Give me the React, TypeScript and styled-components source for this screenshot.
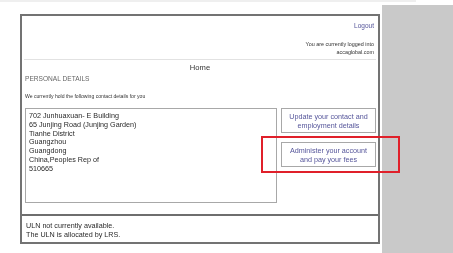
import React from 'react'
import styled, { createGlobalStyle } from 'styled-components'

const GlobalStyle = createGlobalStyle`
  html, body {
    margin: 0;
    padding: 0;
    background: #ffffff;
    font-family: Arial, "Liberation Sans", sans-serif;
    -webkit-font-smoothing: antialiased;
  }
`
const Page = styled.div`
  position: relative;
  width: 453px;
  height: 253px;
  overflow: hidden;
  background: #fff;
  will-change: transform;
`
const TopStrip = styled.div`
  width: 416px;
  height: 2px;
  background: #efefef;
`
const Row = styled.div`
  display: flex;
  align-items: flex-start;
`
const LeftArea = styled.div`
  width: 362px;
  padding: 12px 0 0 20px;
`
const SidePanel = styled.div`
  width: 71px;
  height: 250px;
  margin-top: 3px;
  background: #c9c9c9;
`
const Frame = styled.div`
  width: 356px;
  height: 226px;
  border: 2px solid #737373;
  display: flex;
  flex-direction: column;
  background: #fff;
`
const Header = styled.div`
  height: 43px;
  margin: 0 2px;
  border-bottom: 1px solid #e2e2e2;
  display: flex;
  flex-direction: column;
  align-items: flex-end;
  padding-right: 2px;
`
const LogoutLink = styled.a`
  margin-top: 6px;
  font-size: 6.5px;
  color: #55559a;
  text-decoration: none;
`
const LoggedIn = styled.div`
  margin-top: 11px;
  font-size: 5.4px;
  line-height: 8px;
  color: #333;
  text-align: right;
`
const Home = styled.div`
  text-align: center;
  font-size: 7.6px;
  color: #333;
  margin-top: 3px;
  line-height: 9px;
`
const SectionTitle = styled.div`
  font-size: 6.6px;
  color: #666;
  padding-left: 3px;
  margin-top: 2px;
  line-height: 9px;
`
const Intro = styled.div`
  font-size: 5.1px;
  color: #333;
  padding-left: 3px;
  margin-top: 10px;
  line-height: 7px;
`
const Content = styled.div`
  display: flex;
  gap: 4px;
  padding: 0 2px 0 3px;
  margin-top: 8px;
  height: 106px;
`
const AddressBox = styled.div`
  width: 246px;
  height: 90px;
  border: 1px solid #a8a8a8;
  padding: 3px 3px 0;
  font-size: 7.2px;
  line-height: 8.8px;
  color: #2a2a2a;
`
const Actions = styled.div`
  display: flex;
  flex-direction: column;
  gap: 9px;
`
const ActionButton = styled.div`
  width: 93px;
  height: 23px;
  border: 1px solid #a8a8a8;
  display: flex;
  align-items: center;
  justify-content: center;
  text-align: center;
  font-size: 7.2px;
  line-height: 9px;
  color: #55559a;
`
const Footer = styled.div`
  flex: 1;
  border-top: 2px solid #6e6e6e;
  padding: 5px 4px 0;
  font-size: 7.2px;
  line-height: 9px;
  color: #2a2a2a;
`
const Highlight = styled.div`
  position: absolute;
  left: 261px;
  top: 136px;
  width: 135px;
  height: 33px;
  border: 2px solid #e0202a;
`

const address = [
  '702 Junhuaxuan- E Building',
  '65 Junjing Road (Junjing Garden)',
  'Tianhe District',
  'Guangzhou',
  'Guangdong',
  'China,Peoples Rep of',
  '510665',
]

export default function App() {
  return (
    <Page>
      <GlobalStyle />
      <TopStrip />
      <Row>
        <LeftArea>
          <Frame>
            <Header>
              <LogoutLink>Logout</LogoutLink>
              <LoggedIn>
                You are currently logged into
                <br />
                accaglobal.com
              </LoggedIn>
            </Header>
            <Home>Home</Home>
            <SectionTitle>PERSONAL DETAILS</SectionTitle>
            <Intro>We currently hold the following contact details for you</Intro>
            <Content>
              <AddressBox>
                {address.map(line => (
                  <div key={line}>{line}</div>
                ))}
              </AddressBox>
              <Actions>
                <ActionButton>Update your contact and<br />employment details</ActionButton>
                <ActionButton>Administer your account<br />and pay your fees</ActionButton>
              </Actions>
            </Content>
            <Footer>
              ULN not currently available.
              <br />
              The ULN is allocated by LRS.
            </Footer>
          </Frame>
        </LeftArea>
        <SidePanel />
      </Row>
      <Highlight />
    </Page>
  )
}
